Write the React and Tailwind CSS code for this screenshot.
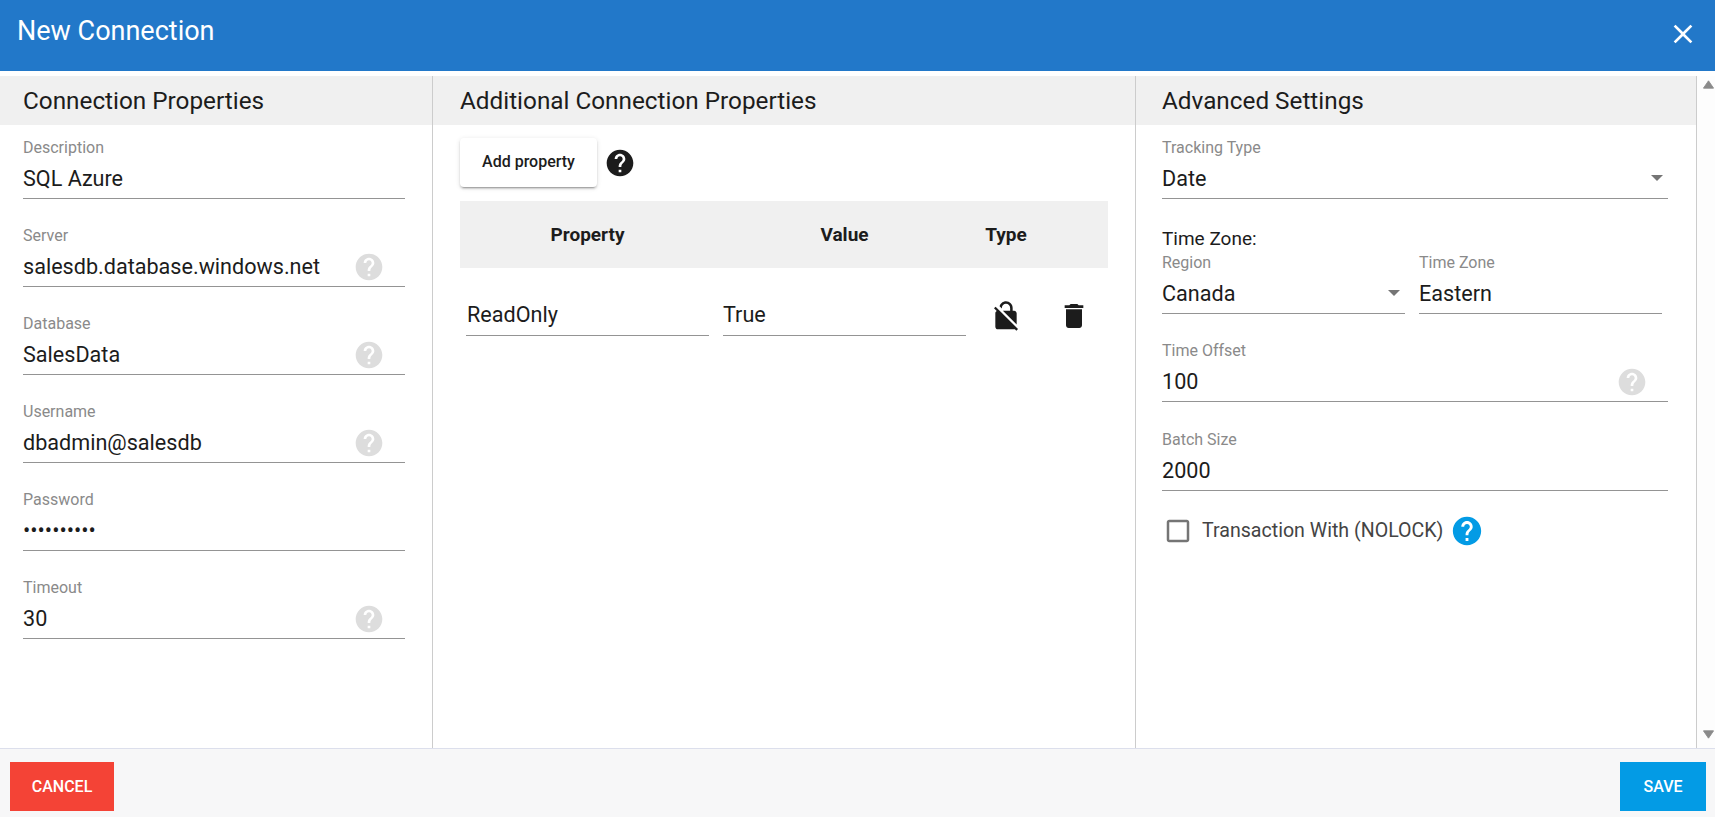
import React from "react";

const HELP = "M12 2C6.48 2 2 6.48 2 12s4.48 10 10 10 10-4.48 10-10S17.52 2 12 2zm1 17h-2v-2h2v2zm2.07-7.75l-.9.92C13.45 12.9 13 13.5 13 15h-2v-.5c0-1.1.45-2.1 1.17-2.83l1.24-1.26c.37-.36.59-.86.59-1.41 0-1.1-.9-2-2-2s-2 .9-2 2H8c0-2.21 1.79-4 4-4s4 1.79 4 4c0 .88-.36 1.68-.93 2.25z";
const LOCK = "M21 21.78L4.22 5 3 6.22l2.04 2.04C4.42 8.6 4 9.25 4 10v10c0 1.1.9 2 2 2h12c.23 0 .45-.05.66-.12L19.78 23 21 21.78zM8.9 6c0-1.71 1.39-3.1 3.1-3.1s3.1 1.39 3.1 3.1v2H9.66L20 18.34V10c0-1.1-.9-2-2-2h-1V6c0-2.76-2.24-5-5-5-2.32 0-4.26 1.59-4.82 3.74L8.9 6.46V6z";
const TRASH = "M6 19c0 1.1.9 2 2 2h8c1.1 0 2-.9 2-2V7H6v12zM19 4h-3.5l-1-1h-5l-1 1H5v2h14V4z";
const CLOSE = "M19 6.41L17.59 5 12 10.59 6.41 5 5 6.41 10.59 12 5 17.59 6.41 19 12 13.41 17.59 19 19 17.59 13.41 12z";
const BOX = "M19 5v14H5V5h14m0-2H5c-1.1 0-2 .9-2 2v14c0 1.1.9 2 2 2h14c1.1 0 2-.9 2-2V5c0-1.1-.9-2-2-2z";

function Icon({ d, className }) {
  return (
    <svg viewBox="0 0 24 24" className={className} fill="currentColor">
      <path d={d} />
    </svg>
  );
}

function Caret({ className }) {
  return (
    <svg viewBox="0 0 12 6" className={"w-[12px] h-[6px] " + className} fill="#757575">
      <path d="M0 0l6 6 6-6z" />
    </svg>
  );
}

function Field({ label, value, help, caret, tight, className = "" }) {
  return (
    <div className={className}>
      <div className={(tight ? "h-[23px] pt-[4px] " : "h-[32px] pt-[13px] ") + "text-[16px] leading-[20px] text-[#8a8a8a]"}>
        {label}
      </div>
      <div className="relative h-[42px] border-b border-[#949494] text-[21.6px] leading-[44px] text-[#1c1c1c] whitespace-nowrap">
        {value}
        {help && (
          <Icon d={HELP} className="absolute right-[20px] top-[6px] w-[32px] h-[32px] text-[#dddddd]" />
        )}
        {caret && <Caret className="absolute right-[5px] top-[18px]" />}
      </div>
    </div>
  );
}

function SectionTitle({ children, className = "" }) {
  return (
    <div className={"h-[49px] bg-[#f0f0f0] text-[24.3px] leading-[49px] text-[#1c1c1c] whitespace-nowrap " + className}>
      {children}
    </div>
  );
}

export default function App() {
  return (
    <div className="w-[1715px] h-[817px] flex flex-col overflow-hidden bg-white font-['Roboto',sans-serif]">
      <header className="h-[71px] shrink-0 bg-[#2278c9] flex items-start justify-between pl-[17px] pr-[16px] text-white">
        <div className="text-[27px] leading-[62px]">New Connection</div>
        <Icon d={CLOSE} className="w-[32px] h-[32px] mt-[18px]" />
      </header>

      <main className="mt-[5px] flex-1 min-h-0 flex">
        <section className="w-[433px] shrink-0 border-r border-[#cccccc] flex flex-col">
          <SectionTitle className="pl-[23px]">Connection Properties</SectionTitle>
          <div className="pl-[23px] pr-[27px] flex flex-col gap-[14px]">
            <Field label="Description" value="SQL Azure" />
            <Field label="Server" value="salesdb.database.windows.net" help />
            <Field label="Database" value="SalesData" help />
            <Field label="Username" value="dbadmin@salesdb" help />
            <Field label="Password" value="••••••••••" />
            <Field label="Timeout" value="30" help />
          </div>
        </section>

        <section className="w-[703px] shrink-0 border-r border-[#cccccc] flex flex-col">
          <SectionTitle className="pl-[27px]">Additional Connection Properties</SectionTitle>
          <div className="pl-[27px] pr-[27px]">
            <div className="mt-[13px] flex items-center gap-[7px]">
              <button className="w-[137px] h-[49px] pb-[2px] bg-white rounded-[4px] shadow-[0_3px_1px_-2px_rgba(0,0,0,0.2),0_2px_2px_0_rgba(0,0,0,0.14),0_1px_5px_0_rgba(0,0,0,0.12)] text-[16px] font-medium text-[#1c1c1c]">
                Add property
              </button>
              <Icon d={HELP} className="w-[32px] h-[32px] text-[#1c1c1c]" />
            </div>
            <div className="mt-[14px] h-[67px] pt-[2px] bg-[#f0f0f0] px-[6px] flex items-center text-[19px] font-bold text-[#1c1c1c] text-center">
              <div className="w-[243px] mr-[14px]">Property</div>
              <div className="w-[243px]">Value</div>
              <div className="w-[80px]">Type</div>
            </div>
            <div className="mt-[26px] px-[6px] flex items-end">
              <div className="w-[243px] mr-[14px] h-[42px] pl-[1px] border-b border-[#949494] text-[21.6px] leading-[42px] text-[#1c1c1c]">ReadOnly</div>
              <div className="w-[243px] h-[42px] border-b border-[#949494] text-[21.6px] leading-[42px] text-[#1c1c1c]">True</div>
              <div className="w-[80px] flex justify-center self-center mt-[2px] text-[#1c1c1c]">
                <Icon d={LOCK} className="w-[32px] h-[32px]" />
              </div>
              <div className="w-[56px] flex justify-center self-center mt-[2px] text-[#1c1c1c]">
                <Icon d={TRASH} className="w-[32px] h-[32px]" />
              </div>
            </div>
          </div>
        </section>

        <section className="flex-1 min-w-0 flex flex-col">
          <SectionTitle className="pl-[26px]">Advanced Settings</SectionTitle>
          <div className="pl-[26px] pr-[28px] flex flex-col">
            <Field label="Tracking Type" value="Date" caret />
            <div className="mt-[29px] h-[21px] text-[19px] leading-[21px] text-[#1c1c1c]">Time Zone:</div>
            <div className="flex gap-[14px]">
              <Field tight className="w-[243px]" label="Region" value="Canada" caret />
              <Field tight className="w-[243px]" label="Time Zone" value="Eastern" />
            </div>
            <Field className="mt-[14px]" label="Time Offset" value="100" help />
            <Field className="mt-[15px]" label="Batch Size" value="2000" />
            <div className="mt-[23px] flex items-center">
              <Icon d={BOX} className="w-[30px] h-[30px] ml-[1px] text-[#757575]" />
              <span className="ml-[9px] text-[19.6px] leading-[30px] text-[#444444] whitespace-nowrap">Transaction With (NOLOCK)</span>
              <Icon d={HELP} className="w-[34px] h-[34px] ml-[7px] text-[#039be5]" />
            </div>
          </div>
        </section>

        <aside className="w-[19px] shrink-0 border-l border-[#cccccc] bg-[#fdfdfd] flex flex-col justify-between items-center pl-[5px] pt-[4px] pb-[9px]">
          <svg viewBox="0 0 12 9" className="w-[11px] h-[9px]" fill="#8a8a8a"><path d="M6 0.5l5.5 8H0.5z" stroke="#8a8a8a" strokeLinejoin="round" /></svg>
          <svg viewBox="0 0 12 9" className="w-[11px] h-[9px]" fill="#8a8a8a"><path d="M6 8.5l5.5-8H0.5z" stroke="#8a8a8a" strokeLinejoin="round" /></svg>
        </aside>
      </main>

      <footer className="h-[69px] shrink-0 border-t border-[#dcdfec] bg-[#f7f7f8] pt-[13px] pl-[10px] pr-[9px] flex justify-between items-start">
        <button className="w-[104px] h-[49px] bg-[#f44336] text-white text-[16px] font-medium">CANCEL</button>
        <button className="w-[86px] h-[49px] bg-[#039be5] text-white text-[16px] font-medium">SAVE</button>
      </footer>
    </div>
  );
}
